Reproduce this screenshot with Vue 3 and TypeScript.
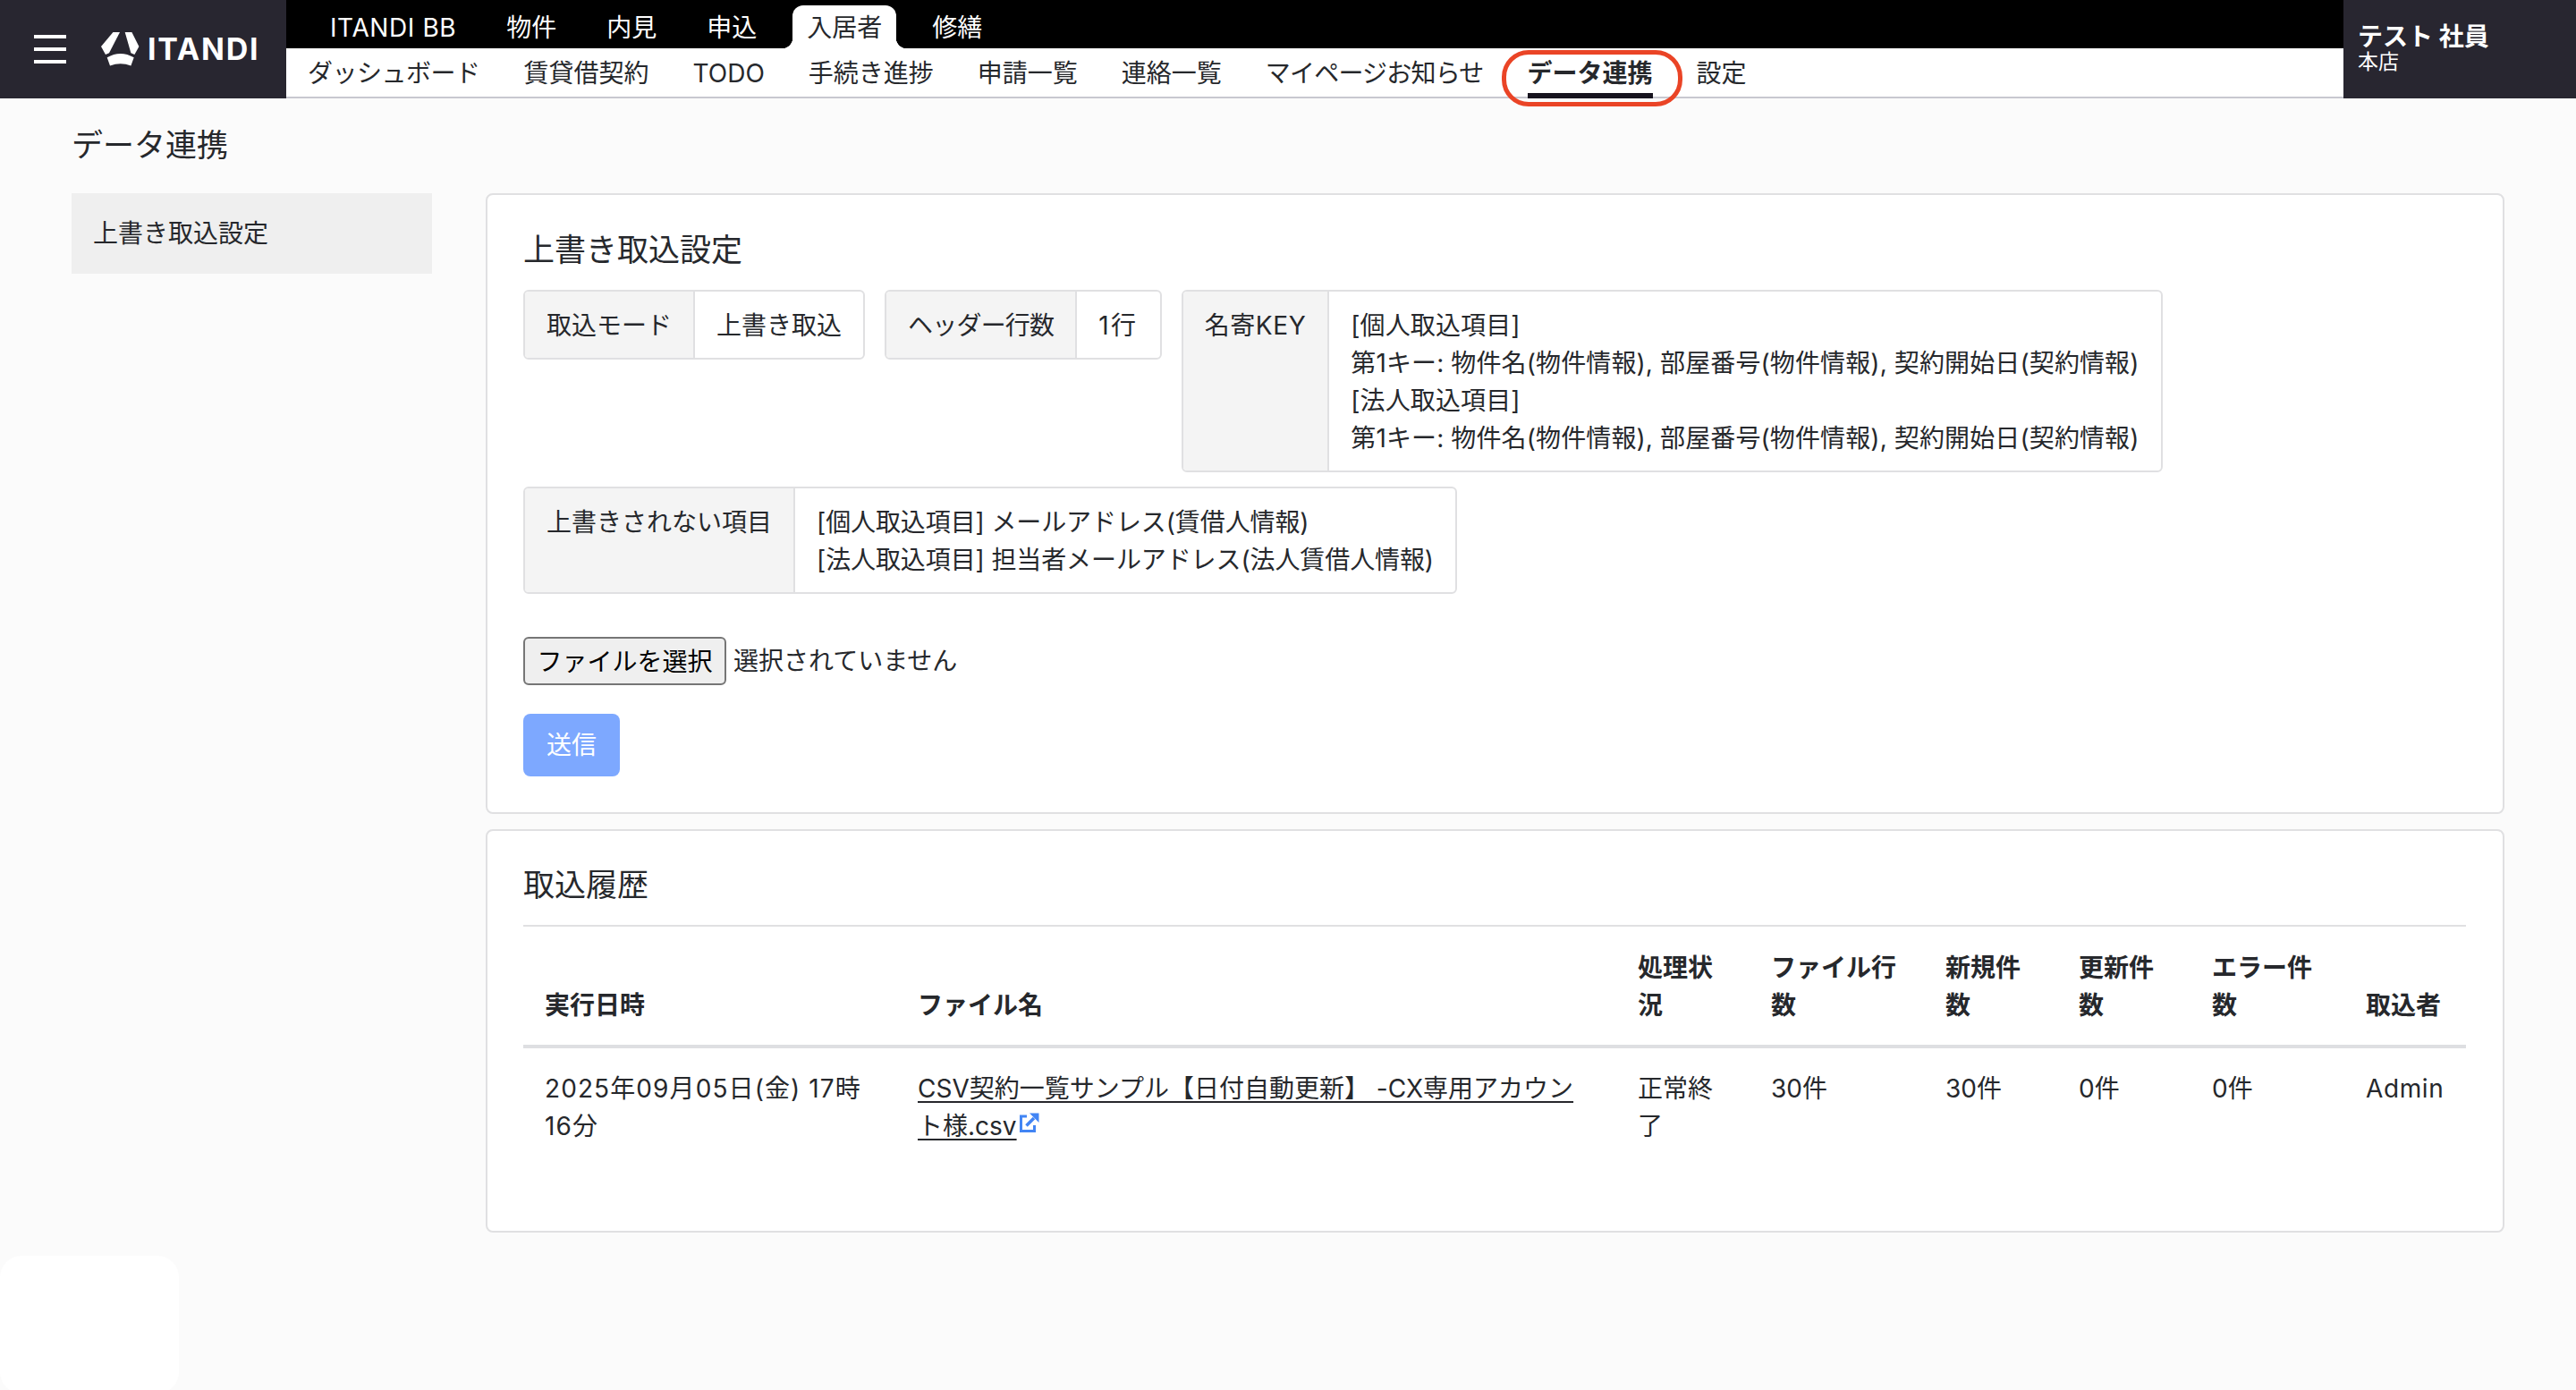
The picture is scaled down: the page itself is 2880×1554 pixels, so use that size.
<script setup lang="ts">
const mainNav = ['ITANDI BB', '物件', '内見', '申込', '入居者', '修繕']
const subNav = [
  { label: 'ダッシュボード', cls: 'tight-s' },
  { label: '賃貸借契約' },
  { label: 'TODO' },
  { label: '手続き進捗' },
  { label: '申請一覧' },
  { label: '連絡一覧' },
  { label: 'マイページお知らせ', cls: 'tight' },
  { label: 'データ連携', cls: 'active' },
  { label: '設定' },
]

const columns = [
  { label: '実行日時', width: 417 },
  { label: 'ファイル名', width: 805 },
  { label: '処理状況', width: 149 },
  { label: 'ファイル行数', width: 195 },
  { label: '新規件数', width: 149 },
  { label: '更新件数', width: 149 },
  { label: 'エラー件数', width: 172 },
  { label: '取込者', width: 136 },
]
</script>

<template>
  <div class="page">
    <header class="header">
      <div class="brand">
        <button class="burger" aria-label="menu"><span></span><span></span><span></span></button>
        <svg class="logo-mark" viewBox="0 0 43 38" width="43" height="38">
          <path d="M13.4 0H21L9 23.3 5 25 0 16z" fill="#fff" />
          <path d="M26.7 0h7.7l8 16-5 9-4-1.7z" fill="#fff" />
          <path d="M6.7 28.3Q21.7 19.5 36.7 28.3L33.4 37.5Q21.7 33 10 37.5z" fill="#fff" />
        </svg>
        <span class="logo-text">ITANDI</span>
      </div>
      <div class="navs">
        <nav class="main-nav">
          <a
            v-for="item in mainNav"
            :key="item"
            class="main-item"
            :class="{ active: item === '入居者', latin: item === 'ITANDI BB' }"
          >{{ item }}</a>
        </nav>
        <nav class="sub-nav">
          <a v-for="item in subNav" :key="item.label" class="sub-item" :class="item.cls">
            {{ item.label }}
            <i v-if="item.cls === 'active'" class="highlight"></i>
          </a>
        </nav>
      </div>
      <div class="user">
        <div class="user-name">テスト 社員</div>
        <div class="user-shop">本店</div>
      </div>
    </header>

    <h1 class="page-title">データ連携</h1>

    <div class="body">
      <aside class="side">
        <div class="side-item">上書き取込設定</div>
      </aside>

      <main class="content">
        <section class="card card-form">
          <h2>上書き取込設定</h2>
          <div class="infos">
            <dl class="info">
              <dt>取込モード</dt>
              <dd>上書き取込</dd>
            </dl>
            <dl class="info">
              <dt class="tight">ヘッダー行数</dt>
              <dd class="rows">1行</dd>
            </dl>
            <dl class="info">
              <dt class="wide-s">名寄KEY</dt>
              <dd class="wide">
                [個人取込項目]<br />
                第1キー: 物件名(物件情報), 部屋番号(物件情報), 契約開始日(契約情報)<br />
                [法人取込項目]<br />
                第1キー: 物件名(物件情報), 部屋番号(物件情報), 契約開始日(契約情報)
              </dd>
            </dl>
            <dl class="info">
              <dt>上書きされない項目</dt>
              <dd class="narrow">
                [個人取込項目] メールアドレス(賃借人情報)<br />
                [法人取込項目] 担当者メールアドレス(法人賃借人情報)
              </dd>
            </dl>
          </div>
          <div class="file-row">
            <button class="file-btn">ファイルを選択</button>
            <span class="file-text">選択されていません</span>
          </div>
          <button class="submit" disabled>送信</button>
        </section>

        <section class="card card-history">
          <h2>取込履歴</h2>
          <table class="history">
            <colgroup>
              <col v-for="c in columns" :key="c.label" :style="{ width: c.width + 'px' }" />
            </colgroup>
            <thead>
              <tr>
                <th v-for="c in columns" :key="c.label">{{ c.label }}</th>
              </tr>
            </thead>
            <tbody>
              <tr>
                <td class="date">2025年09月05日(金) 17時<br />16分</td>
                <td>
                  <a class="file-link">CSV契約一覧サンプル【日付自動更新】 -CX専用アカウント様.csv</a>
                  <svg class="ext" viewBox="0 0 22 22" width="22" height="22">
                    <path d="M8 4H1.5V20.5H16.5V14" fill="none" stroke="#4285f4" stroke-width="3" />
                    <path d="M7.5 14.5 16 6" fill="none" stroke="#4285f4" stroke-width="3.5" />
                    <path d="M11 0.5H21.5V11z" fill="#4285f4" />
                  </svg>
                </td>
                <td>正常終了</td>
                <td>30件</td>
                <td>30件</td>
                <td>0件</td>
                <td>0件</td>
                <td class="admin">Admin</td>
              </tr>
            </tbody>
          </table>
        </section>
      </main>
    </div>

    <div class="corner-box"></div>
  </div>
</template>

<style>
body {
  background: #fbfbfb;
}
</style>

<style scoped>
.page {
  position: relative;
  height: 1554px;
  overflow: hidden;
  background: #fbfbfb;
  color: #26282c;
  font-family: Inter, "Noto Sans CJK JP", sans-serif;
  font-size: 28px;
  line-height: 42px;
}
.tight {
  letter-spacing: -0.8px;
}
.tight-s {
  letter-spacing: -0.5px;
}
.header {
  display: flex;
  height: 110px;
}
.brand {
  width: 320px;
  flex: none;
  background: #282630;
  display: flex;
  align-items: center;
}
.burger {
  width: 36px;
  height: 32px;
  margin-left: 38px;
  padding: 0;
  border: 0;
  background: none;
  display: flex;
  flex-direction: column;
  justify-content: space-between;
}
.burger span {
  height: 4px;
  background: #fff;
}
.logo-mark {
  margin-left: 39px;
}
.logo-text {
  margin-left: 9px;
  color: #fff;
  font-weight: 700;
  font-size: 34px;
  letter-spacing: 1.8px;
  line-height: 1;
}
.navs {
  flex: 1;
  min-width: 0;
}
.main-nav {
  height: 54px;
  background: #000;
  display: flex;
  align-items: flex-end;
  padding-left: 31px;
  gap: 20px;
}
.main-item {
  height: 48px;
  padding: 0 18px;
  color: #fff;
  line-height: 50px;
  position: relative;
}
.main-item.latin {
  letter-spacing: 0.6px;
}
.main-item.active {
  margin: 0 2px;
  padding: 0 16px;
  background: #fff;
  color: #26282c;
  border-radius: 12px 12px 0 0;
}
.main-item.active::before,
.main-item.active::after {
  content: "";
  position: absolute;
  bottom: 0;
  width: 12px;
  height: 12px;
}
.main-item.active::before {
  left: -12px;
  background: radial-gradient(circle at 0 0, #000 12px, #fff 12.5px);
}
.main-item.active::after {
  right: -12px;
  background: radial-gradient(circle at 100% 0, #000 12px, #fff 12.5px);
}
.sub-nav {
  height: 56px;
  background: #fff;
  border-bottom: 2px solid #c8c8d0;
  box-sizing: border-box;
  display: flex;
  padding-left: 24px;
  gap: 49px;
}
.sub-item {
  position: relative;
  line-height: 57px;
  height: 56px;
  box-sizing: border-box;
  white-space: nowrap;
}
.sub-item.active {
  font-weight: 700;
  border-bottom: 6px solid #17141f;
}
.highlight {
  position: absolute;
  top: 2px;
  bottom: -15px;
  left: -29px;
  right: -33px;
  border: 5px solid #ea4426;
  border-radius: 30px;
  pointer-events: none;
}
.user {
  width: 260px;
  flex: none;
  box-sizing: border-box;
  padding: 23px 16px;
  background: #282630;
  color: #fff;
}
.user-name {
  font-weight: 700;
  line-height: 36px;
}
.user-shop {
  font-size: 23px;
  line-height: 20px;
}
.page-title {
  margin: 0;
  padding: 30px 0 0 80px;
  height: 106px;
  box-sizing: border-box;
  font-size: 35px;
  font-weight: 400;
  line-height: 44px;
}
.body {
  display: flex;
  align-items: flex-start;
  padding-left: 80px;
}
.side {
  width: 403px;
  flex: none;
}
.side-item {
  height: 90px;
  padding-left: 24px;
  background: #efefef;
  line-height: 90px;
}
.content {
  width: 2257px;
  margin-left: 60px;
  display: flex;
  flex-direction: column;
  gap: 17px;
}
.card {
  background: #fff;
  border: 2px solid #e0e0e2;
  border-radius: 8px;
  padding: 0 40px;
}
.card h2 {
  margin: 0;
  font-size: 35px;
  font-weight: 400;
  line-height: 48px;
}
.card-form {
  height: 694px;
  box-sizing: border-box;
  padding-top: 37px;
}
.infos {
  display: flex;
  flex-wrap: wrap;
  margin-top: 21px;
  gap: 16px 22px;
}
.info {
  margin: 0;
  display: flex;
  align-items: stretch;
  border: 2px solid #e0e0e2;
  border-radius: 6px;
  background: #fff;
  align-self: flex-start;
}
.info dt {
  padding: 17px 24px 15px;
  background: #f4f4f4;
  border-right: 2px solid #e0e0e2;
  border-radius: 4px 0 0 4px;
}
.info dd {
  margin: 0;
  padding: 17px 24px 15px;
  white-space: nowrap;
}
.info dt.wide-s {
  letter-spacing: 0.6px;
}
.info dd.rows {
  letter-spacing: 2.5px;
}
.info dd.wide {
  letter-spacing: 0.12px;
}
.info dd.narrow {
  letter-spacing: -0.1px;
}
.file-row {
  display: flex;
  align-items: center;
  margin-top: 48px;
  gap: 8px;
}
.file-btn {
  height: 54px;
  width: 227px;
  padding: 1px 0 0;
  border: 2px solid #767676;
  border-radius: 6px;
  background: #efefef;
  color: #000;
  font: inherit;
}
.submit {
  display: block;
  margin-top: 32px;
  width: 108px;
  height: 70px;
  padding: 0;
  border: 0;
  border-radius: 8px;
  background: #7da8ff;
  color: #fff;
  font: inherit;
}
.card-history {
  height: 451px;
  box-sizing: border-box;
  padding-top: 36px;
}
.history {
  margin-top: 21px;
  width: 2172px;
  border-collapse: collapse;
  table-layout: fixed;
  border-top: 2px solid #e0e0e2;
}
.history th {
  padding: 25px 24px 23px;
  text-align: left;
  vertical-align: bottom;
  font-weight: 700;
  border-bottom: 4px solid #dedfe2;
}
.history td {
  padding: 24px;
  vertical-align: top;
}
.history td.date {
  letter-spacing: 1.1px;
}
.history td.admin {
  letter-spacing: 0.6px;
}
.file-link {
  color: #26282c;
  text-decoration: underline;
  text-decoration-thickness: 2px;
  text-underline-offset: 4px;
}
.ext {
  margin-left: 3px;
  vertical-align: 3px;
}
.corner-box {
  position: absolute;
  left: 0;
  bottom: -4px;
  width: 200px;
  height: 154px;
  background: #fff;
  border-radius: 24px;
}
</style>
